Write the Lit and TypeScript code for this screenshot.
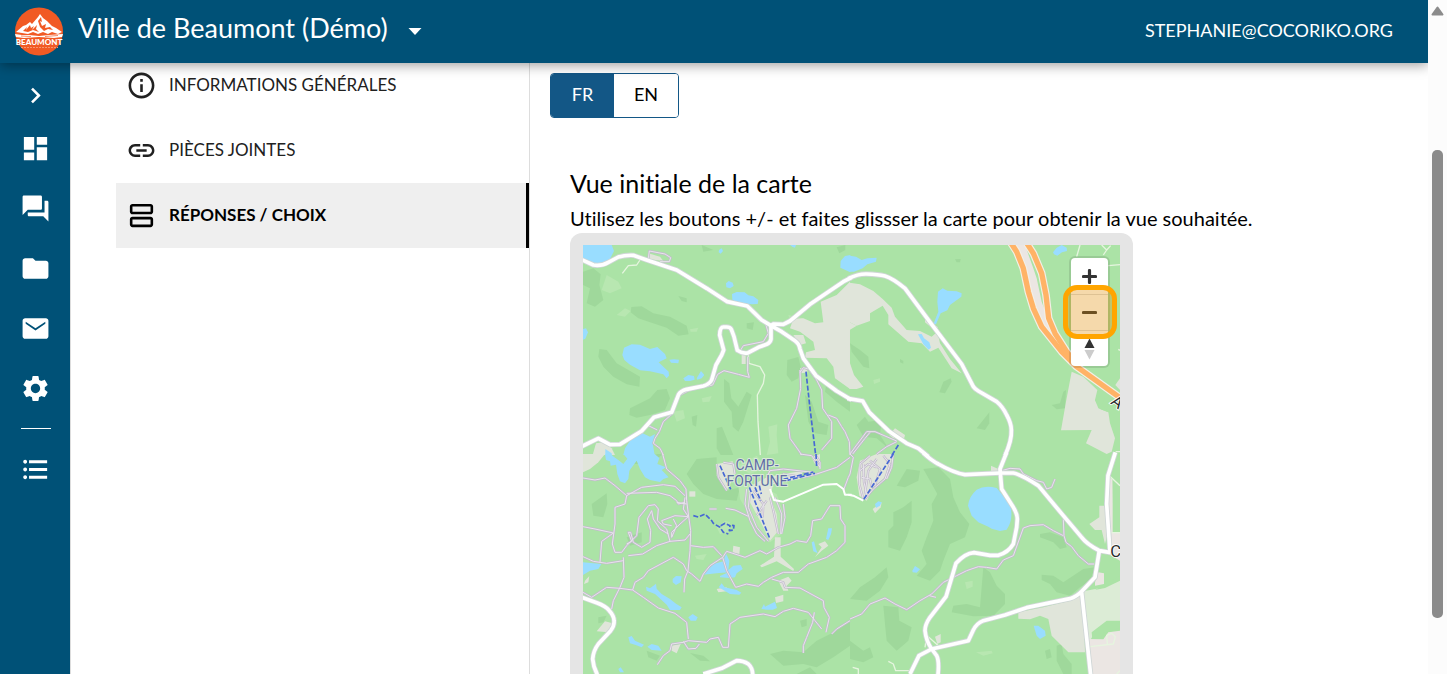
import { LitElement, html, css, svg } from "lit";
import { customElement, state } from "lit/decorators.js";

type Layer = { kind: string; nw?: string[]; ne?: string[]; sw?: string[]; se?: string[] };

/* The map is stored as four tiles; every tile holds paths in its own coordinates. */
const LAYERS: Layer[] = [
  {
    kind: "shade",
    nw: [
      "M39 110L70 100L92 118L88 150L100 195L75 215L50 205L60 160L39 150Z",
      "M184 216L215 214L250 235L300 245L350 272L356 298L325 302L290 278L240 262L205 250L182 232Z",
      "M88 342L110 345L140 385L175 405L210 425L208 455L170 448L130 425L100 395L85 365Z",
      "M180 520L240 490L262 465L290 462L300 490L285 525L240 540L200 548L178 540Z",
      "M462 432L478 445L484 490L505 515L530 470L545 480L520 560L505 590L488 575L485 530L462 500Z",
      "M440 580L456 575L470 610L490 660H452L440 640Z",
      "M365 545L382 540L378 575L368 570Z",
      "M652 375L685 366L692 395L685 430L665 440L650 420Z",
      "M705 480L725 500L745 560L775 570L770 600L735 595L715 560Z",
      "M770 440L800 460L840 490V530L800 500L765 470Z",
      "M800 37L826 30V45L808 55Z",
      "M325 183L350 190V202L335 198Z",
      "M530 265L552 262L548 285L530 280Z",
      "M395 30L430 45L400 50Z",
    ],
    ne: [
      "M0 325L30 345L55 365L58 400L40 395L5 350Z",
      "M280 440L302 430L305 440L285 475L268 472Z",
      "M380 580L418 532V565L405 585Z",
      "M605 510L630 505L640 470L648 465L645 520L620 523Z",
      "M20 570L45 545L55 560L95 555L90 600L115 640L80 610L40 605Z",
      "M315 73L332 72L330 82L320 82Z",
      "M150 372L160 378V386L150 382Z",
    ],
    sw: [
      "M380 15L440 10L440 60L470 110L510 100L500 140L440 135L400 120L370 90L350 60Z",
      "M65 150L110 118L112 150L100 190L70 185Z",
      "M170 30L262 0H280L240 30Z",
      "M600 600L640 590L700 595L740 560L800 530L840 500V575L790 610L740 640L700 630L640 635Z",
      "M690 500L710 495V515L695 520Z",
      "M85 490L110 485L100 505L85 508Z",
      "M360 597L400 605L420 622L390 620Z",
      "M230 590L270 605L260 620L235 610Z",
      "M680 660L720 640L740 660Z",
      "M170 250L215 235L215 265L180 275Z",
    ],
    se: [
      "M220 45L265 40L300 75L310 130L330 175L358 210L345 250L300 270L280 320L270 350L240 380L200 365L230 330L215 290L230 250L250 200L245 150L262 120L240 80Z",
      "M130 175L160 160L185 140V205L170 250L150 290L115 280L115 230L130 215Z",
      "M30 400L75 370L110 340L115 370L90 410L50 440L0 435Z",
      "M100 455L145 460L148 500L185 520L175 560L140 590L110 560L105 510Z",
      "M310 455L350 450L390 460L400 340L420 355L440 395L465 420V450L430 485L370 487L305 475Z",
      "M570 240L600 235L640 250L650 280L630 285L610 265L570 250Z",
      "M575 362L610 365L640 385L700 345L735 340L720 380L690 400L660 425L620 415L600 390L575 378Z",
      "M620 575L635 570L640 600L665 630V660H640L620 620Z",
      "M585 590L600 585L605 610L590 615Z",
      "M0 560L40 590L60 580L70 610L40 625L0 615Z",
      "M170 45L210 50L205 80L165 100L140 95Z",
    ],
  },
  {
    kind: "light",
    nw: [
      "M110 120L145 140L155 160L120 175L95 165Z",
      "M165 220L182 228L165 245L140 240Z",
      "M310 530L340 525L345 550L320 560Z",
      "M360 283L385 278L380 290L362 290Z",
      "M655 240L700 250L690 262L660 255Z",
      "M595 575L622 568L620 600L625 655L590 660L600 620Z",
      "M395 490L425 483L418 500L398 502Z",
    ],
    ne: ["M70 435L90 430V440L72 447Z"],
    sw: [
      "M505 95L560 90L620 120L645 190L635 240L600 265L575 245L545 195L510 135Z",
      "M375 305L410 300L400 318L380 315Z",
      "M440 220L465 200L480 205L478 235L450 240Z",
      "M500 35L560 5L590 40L540 60Z",
    ],
    se: [
      "M345 385L368 380V398L350 405Z",
      "M378 595L425 590L428 598L400 605Z",
      "M680 455L695 460V480L680 478Z",
    ],
  },
  {
    kind: "meadow",
    se: ["M700 412L765 400L810 372V505H775L740 525L720 560L706 560Z"],
  },
  {
    kind: "sand",
    nw: [
      "M840 140L800 180L752 200L760 262L735 265L700 250L670 252L660 280L690 290L730 320L735 345L708 352L705 368L770 370L790 395L795 430L840 462Z",
      "M670 300L700 300L708 325L690 330Z",
      "M235 55L270 65L280 78L235 72Z",
      "M68 660L78 625L100 622L125 640L135 660Z",
      "M515 360H527V387H515Z",
      "M690 400L712 395L712 412L695 415Z",
    ],
    ne: [
      "M-1 143L30 148L70 168L98 192L125 218L135 245L170 285L210 288L245 305L262 290L270 325L300 372L335 415L305 400L265 338L240 350L215 325L175 320L115 268V240L98 212L60 235V258L20 272L-1 262Z",
      "M-1 262L20 272L-6 288L-18 300L-12 345L0 385L12 420L40 455L20 462L-1 462Z",
      "M225 250L262 275L270 300L225 262Z",
      "M665 410L700 425L742 465L735 495L745 520L775 532L780 565L795 610L785 650L770 657L708 625L725 585L633 586L648 500Z",
      "M118 600L135 580L165 600L162 612L130 610Z",
      "M810 430V465L796 450Z",
    ],
    sw: [
      "M39 0H105L85 25L60 45L39 55Z",
      "M440 30L488 22L493 65L470 110L452 85L440 65Z",
      "M535 100L590 70L640 60L700 50L690 75L610 90L600 130L620 180L625 230L600 260L570 200L540 145Z",
      "M358 112H376V128H358Z",
      "M615 250H632V308L672 345L670 351L620 322L575 340L570 335L612 308Z",
      "M490 275L510 280L508 300L488 296Z",
      "M735 310L755 280L745 270L765 262L775 275L755 290Z",
      "M625 380L655 368L665 380L650 395L655 410L640 410Z",
      "M615 430L640 422L640 442L618 447Z",
      "M80 532L105 502L128 508L115 535Z",
      "M305 575L332 570L320 598L305 590Z",
      "M440 405L470 400V412L445 415Z",
      "M45 380L58 366L55 385L42 390Z",
      "M725 10L750 0V40L735 30Z",
    ],
    se: [
      "M30 20L80 0H130L128 35L100 75L70 100L50 140L28 125L20 70Z",
      "M68 165L95 145L92 160L75 178Z",
      "M423 35L445 45V55H423Z",
      "M505 475L580 460L660 440L690 425L700 440L705 595H655L605 545L595 495L570 485L540 496L505 494Z",
      "M718 210L748 190V155H775L775 230L765 270L755 228L735 228Z",
      "M255 548L272 540V565L262 570Z",
    ],
  },
  {
    kind: "urban",
    se: [
      "M712 555L760 556L775 535L810 530V700H722Z",
      "M775 65L788 78V235H810V320L775 300Z",
      "M735 385L745 355L762 358V390L735 395Z",
    ],
    ne: ["M495 30H525L550 100L560 130L575 200L590 240L615 285L625 340L590 290L562 240L545 180L535 130Z"],
  },
  {
    kind: "forest",
    ne: ["M735 495L750 482L765 490L755 510L775 532L750 522Z"],
    se: [
      "M725 535L770 500H811V520L785 532L762 535L750 555H727Z",
      "M788 78L811 95V222L790 225Z",
      "M735 408L762 392L811 365V380L765 402Z",
    ],
  },
  {
    kind: "water",
    nw: [
      "M39 30H125L132 48L120 72L98 85L65 84L39 72Z",
      "M447 45L455 40L459 48L452 56L446 52Z",
      "M660 30H678L675 38L668 36Z",
      "M468 145L476 138L488 143L491 153L480 160L469 157Z",
      "M486 177L500 171L524 172L535 181L550 184L565 195L563 207L545 208L500 203L487 194Z",
      "M841 60L825 63L812 78L811 98L841 112Z",
      "M39 282L48 280L54 292L46 311L39 314Z",
      "M157 360L162 338L185 328L210 329L240 342L262 336L285 357L290 370L266 382L296 410L297 422L290 430L280 418L240 409L210 406L180 389L163 375Z",
      "M298 374L312 373L327 374L325 385L303 383Z",
      "M340 430L355 420L372 423L374 434L360 438H345Z",
      "M380 430L393 408L403 420L395 430L382 434Z",
      "M160 660L165 640L185 610L215 593L240 605L255 597L248 625L254 660Z",
      "M106 642L125 655V660H106Z",
    ],
    ne: [
      "M0 62L18 65L35 75L52 70L80 68L78 80L52 88L38 100L12 110L0 110Z",
      "M262 200L264 170L278 160L292 167L320 169L335 175L334 185L300 210L292 226L272 235L258 268H250L265 230Z",
      "M204 298L215 297L222 310L238 322L243 338L236 344L220 328Z",
      "M609 52L620 38L635 30L650 38L651 48L636 52L622 62L612 58Z",
    ],
    sw: [
      "M105 0L108 18L120 22L122 35L138 32L142 60L150 82L165 88L175 75L178 50L200 20L210 45L225 70L240 78L270 84L280 75L296 70L275 48L288 40L262 30L268 12L254 0H160L172 14L160 30L148 20L128 6L124 0Z",
      "M39 325L94 330L85 345L60 350L39 363Z",
      "M308 375L318 366L335 367L332 385L318 393L308 385Z",
      "M228 398L240 403L258 389L260 404L275 420L300 435L318 449L335 460L330 468H300L290 452L255 420L230 410Z",
      "M400 362L430 330L460 322L468 298L478 320L475 348L490 335L512 333L518 345L500 358L495 370L478 372L450 370V366L475 355L440 358Z",
      "M446 400L455 388L464 400L500 408L514 416L508 422L480 420Z",
      "M355 490L368 480L383 490L378 500L362 500Z",
      "M175 550L185 546L195 560L222 572L215 580L195 572L180 568Z",
      "M232 578L245 570L265 575L275 590L245 588Z",
      "M145 645L152 640L162 655L150 655Z",
      "M574 465L582 450L585 458L615 443L621 462L608 467H590Z",
      "M725 265L732 262L738 285L743 298L730 292Z",
      "M768 255L775 223H786L783 240L775 258Z",
    ],
    se: [
      "M354 155Q356 128 380 107Q405 92 440 102L455 120L475 145Q486 160 484 185Q484 205 470 227L450 231L425 224L415 218L385 205L365 185Z",
      "M75 150L85 142L95 145L90 155L78 162Z",
      "M187 350L195 336L210 346L200 356L188 355Z",
      "M551 515L565 515L585 530L587 545L570 555L560 545Z",
    ],
  },
  {
    kind: "lane",
    nw: [
      "M210 75L200 90L175 92L157 115",
      "M535 358L537 385L570 395L584 420L580 445L562 480L564 560L571 660",
    ],
    ne: [
      "M690 30L680 65M755 30L770 45L760 60M770 45L782 32M775 92L810 89M805 343L810 346M797 650H810",
    ],
    se: [
      "M778 65L810 95M775 236H810M720 578L790 570L796 548L785 538L770 544L772 570M115 622L130 630L137 650H180M8 640L25 645V660M220 535L265 575M230 545L225 580M810 650L800 660",
    ],
  },
  {
    kind: "trail",
    nw: [
      "M235 70L238 48L285 57L302 68L298 80L270 80",
      "M588 270L595 295L580 320L520 332L512 345",
      "M533 365L533 410L538 427L505 418L462 407L443 418L428 450",
      "M428 450L405 455L360 465L330 480M308 535L280 560L268 590L255 610L250 625L270 640L280 660M235 572L262 585",
      "M690 405L692 460L680 520L655 570L660 610L685 645L695 660M715 400L740 435L755 465L758 520L785 560L785 610L755 645M775 540L800 550L815 575L825 590L838 620L840 660",
      "M690 412L700 398L715 402",
    ],
    ne: [
      "M0 657L20 630L50 590L75 590L140 618M8 657L45 610L60 592M80 657L110 635L140 620",
    ],
    sw: [
      "M278 0L290 45L330 80L348 105L350 140L355 180L362 230L360 290L354 350L344 375L342 415",
      "M39 72L75 78L105 72L135 95L170 125L165 150L135 160L135 210L127 270L135 295L155 295L170 275L200 245L207 190L235 155L255 152L265 165L262 200L290 225L300 262",
      "M170 125L215 100L280 92L315 97L345 125M170 118L260 115L300 125L320 140L325 150L345 145",
      "M39 218L75 225L130 237L95 262L90 325M39 308L70 322L110 328L160 320",
      "M175 305L218 300L260 275L300 262L345 258L360 240",
      "M160 310L162 370L150 400L130 440L125 465M39 415L65 430L110 400L150 403L188 408L220 430L265 462L315 478L350 505L355 555",
      "M188 408L195 385L220 370L235 350L310 310L340 330L350 350L365 360L390 382L400 360L420 335L458 310L470 292L510 305L525 310L570 290L590 300L625 280L660 270L680 260L710 265L722 245L728 200L755 195L780 155H810L812 195L825 215V265L800 290L770 310L715 330L685 355L640 355L605 370L580 385L565 397L530 390L497 400L470 350L458 310",
      "M362 275L400 280L430 278L455 305",
      "M605 375L640 385L645 400L690 402L760 440L762 460L778 490L768 535M715 475L735 500L755 525M733 475L728 505L710 550L700 575V597",
      "M715 475L670 463L640 472L615 488L580 480L510 490L480 510L475 580H458L445 550L420 555L410 565L355 560L340 565L305 570L300 590L280 605L262 632M340 562L355 585L378 583L388 570",
      "M170 270L185 262L175 235H182L190 265L215 280L240 265L242 230L232 195L245 170L250 195L270 225L295 240",
      "M275 200L315 185L355 188L330 210L305 235L305 250L320 215L310 195M345 130L340 165L355 188M320 145L350 150M275 200L280 210L305 215",
      "M418 165H440M467 163L495 168L535 187M785 540L800 525L840 500",
      "M440 30L445 70L470 110M460 25L490 30L495 60M530 105L525 150L540 200L560 240L585 262M540 115L535 160L560 220L595 262M550 110L580 150L578 190M600 130L610 170L625 240M615 130L635 180L632 240M640 150L645 190L635 240M590 70L600 50L640 45L730 55M600 90L640 60L700 70L740 60L800 40L840 10M590 140L560 185M690 0L725 5L750 40M735 0L750 25V45M820 110L835 70L840 60",
    ],
    se: [
      "M0 495L35 480L60 450L105 432L135 450L170 467L210 440L245 420L280 385L320 365L350 350L385 338L410 340L440 345L460 318L490 305L520 222L540 215L580 212L610 230L640 245M640 195L642 245L648 265L665 278L685 305L715 330H732",
      "M455 50L480 43L510 45L520 60L560 80L580 85L590 105L605 100L615 75M238 425L258 430",
      "M30 30L60 5M30 30L28 90L40 135M40 30L42 85L50 120M60 20L90 45L75 95M80 15L55 50L45 120M100 5L120 30L105 75L70 105L45 135M130 0L125 40L110 75M35 70L60 75L65 100M30 50L55 30L80 40M0 0L10 10L0 60",
    ],
  },
  {
    kind: "road-casing",
    nw: [
      "M30 72L70 90Q95 94 115 82L145 66Q165 60 190 61L230 75L320 105L410 160L472 200L532 213L575 255L603 272L635 290L675 317Q688 326 690 342L700 370L738 422L800 468L845 495",
      "M603 272L610 267L640 268L660 258L720 208L820 140L845 127",
      "M603 272V312Q602 322 590 328L565 337L535 353Q520 358 502 346L492 305L484 283Q480 276 470 276H460Q450 276 449 300L461 345L455 360L438 390L425 435Q418 448 400 453L350 463Q332 468 326 478L305 532L252 547L215 588L150 628L120 629L85 610L36 634",
    ],
    ne: [
      "M-5 131Q25 116 50 117Q85 118 105 123Q128 130 165 160L245 268L335 387L370 455Q375 462 385 468L440 500Q458 515 470 540Q484 565 484 585Q486 615 465 662",
      "M-8 490L38 498L58 532L115 587L170 625L205 640L235 665",
    ],
    sw: [
      "M30 428L80 446Q108 456 118 470Q132 485 132 500Q134 515 122 530L85 570Q70 590 68 615Q70 640 82 662",
      "M400 660L455 643L500 620Q520 620 535 630Q548 642 548 662",
    ],
    se: [
      "M220 -3Q245 20 265 30Q310 56 345 62L450 57H490Q510 60 565 95L640 185L695 250Q710 270 748 290L782 296",
      "M470 -5L450 45L455 105L490 160Q502 180 502 195L500 220L490 270Q475 295 445 304H420L372 296Q345 298 318 328L288 428L240 490Q225 512 225 530Q228 560 245 585L260 605Q268 620 264 662",
      "M180 660L207 605L245 585L355 560L370 528Q380 508 400 500L465 483L530 461L660 434Q680 428 697 410L735 370L748 290",
      "M695 415L722 662M796 -5L774 65L770 150L780 296",
    ],
  },
  {
    kind: "minor",
    sw: ["M600 105L612 138L640 143L760 92L800 90L820 105L825 122H845"],
    se: ["M-5 122L10 125L40 140"],
  },
  {
    kind: "highway",
    ne: [
      "M483 24L500 50L520 100L535 170L550 220L575 275L635 350L680 395L815 492",
      "M530 24L550 55L575 115L588 180L596 250L615 295L650 350L685 395",
    ],
  },
  {
    kind: "lift",
    nw: ["M708 410L720 520L737 660"],
    sw: [
      "M450 35L484 110M538 100L600 255M555 100L572 140M738 0L740 40M640 76L730 54M648 80L735 58M568 95L574 120",
      "M370 185L385 189L405 180L425 200L430 208L450 220L460 235L475 240M452 215L465 208L480 215L478 230L490 228L492 215L480 213",
    ],
    ne: ["M145 630L125 662"],
    se: ["M130 0L40 138"],
  },
];

const ORIGINS: Record<string, string> = {
  nw: "translate(0 0)",
  ne: "translate(840 0)",
  sw: "translate(0 657)",
  se: "translate(840 657)",
};

@customElement("area-map")
export class AreaMap extends LitElement {
  static styles = css`
    :host {
      display: block;
      position: relative;
      overflow: hidden;
    }
    .map {
      display: block;
      width: 100%;
      background: #abe3a6;
    }
    path {
      fill: none;
      stroke-linejoin: round;
    }
    .shade path { fill: #9fd89b; }
    .light path { fill: #b8e7b1; }
    .meadow path { fill: #dcecd6; }
    .forest path { fill: #abe3a6; }
    .sand path { fill: #e0e5da; }
    .urban path { fill: #ebe6e3; }
    .water path { fill: #99ddff; }
    .lane path { stroke: #e6f5df; stroke-width: 4; }
    .trail-casing path { stroke: #c2bccb; stroke-width: 7; }
    .trail path { stroke: #e9e4ed; stroke-width: 3; }
    .road-casing path { stroke: #cfd6d6; stroke-width: 16; }
    .road path { stroke: #fff; stroke-width: 11; }
    .minor path { stroke: #fff; stroke-width: 6; }
    .highway-casing path { stroke: #f3efe6; stroke-width: 23; }
    .highway path { stroke: #ffb366; stroke-width: 16; }
    .lift path { stroke: #4668d4; stroke-width: 5; stroke-dasharray: 15 6; }
    .place {
      font-family: Roboto, sans-serif;
      font-size: 42px;
      fill: #626ea5;
      stroke: #d9ead8;
      stroke-width: 6;
      paint-order: stroke;
      text-anchor: middle;
    }
    .town {
      font-family: Roboto, sans-serif;
      font-size: 50px;
      fill: #2b2b2b;
      stroke: #fff;
      stroke-width: 5;
      paint-order: stroke;
    }
    .controls {
      position: absolute;
      top: 13px;
      right: 12px;
      width: 37px;
      border-radius: 4px;
      background: #fff;
      box-shadow: 0 0 0 2px rgb(0 0 0 / 10%);
    }
    .control {
      display: grid;
      place-items: center;
      width: 100%;
      height: 36px;
      padding: 0;
      border: 0;
      background: none;
      color: #333;
    }
    .control + .control {
      border-top: 1px solid #ddd;
    }
    .highlight {
      position: absolute;
      top: 40px;
      right: 3px;
      box-sizing: border-box;
      width: 54px;
      height: 54px;
      border: 5px solid #ffa500;
      border-radius: 14px;
      background: rgb(225 141 0 / 33%);
      pointer-events: none;
    }
  `;

  private layer(kind: string, data: Layer) {
    return svg`<g class=${kind}>${Object.keys(ORIGINS).map(
      (tile) => svg`<g transform=${ORIGINS[tile]}>${((data as any)[tile] ?? []).map((d: string) => svg`<path d=${d} />`)}</g>`
    )}</g>`;
  }

  render() {
    return html`
      <svg class="map" viewBox="39 30 1611 1350" role="img" aria-label="Carte de Camp-Fortune">
        ${LAYERS.map((l) => {
          if (l.kind === "trail") return [this.layer("trail-casing", l), this.layer("trail", l)];
          if (l.kind === "road-casing") return [this.layer("road-casing", l), this.layer("road", l)];
          if (l.kind === "highway") return [this.layer("highway-casing", l), this.layer("highway", l)];
          return this.layer(l.kind, l);
        })}
        <text class="place" x="561" y="704">CAMP-</text>
        <text class="place" x="561" y="752">FORTUNE</text>
        <text class="town" transform="translate(1619 505) rotate(36)">A</text>
        <text class="town" x="1621" y="965">C</text>
      </svg>
      <div class="controls">
        <button class="control" aria-label="Zoom avant">
          <svg width="15" height="15" viewBox="0 0 15 15"><path d="M7.500 1.500V13.500M1.500 7.500H13.500" stroke="#333" stroke-width="3.200" stroke-linecap="round" /></svg>
        </button>
        <button class="control" aria-label="Zoom arrière">
          <svg width="15" height="15" viewBox="0 0 15 15"><path d="M1.500 7.500H13.500" stroke="#333" stroke-width="3.200" stroke-linecap="round" /></svg>
        </button>
        <button class="control" aria-label="Orienter vers le nord">
          <svg width="11" height="22" viewBox="0 0 11 22"><polygon points="0.500,10 5.500,0.500 10.500,10" fill="#333" /><polygon points="0.500,12 5.500,21.500 10.500,12" fill="#ccc" /></svg>
        </button>
      </div>
      <div class="highlight"></div>
    `;
  }
}

const ICONS: Record<string, string> = {
  chevron: "M10 6L8.59 7.41 13.17 12l-4.58 4.59L10 18l6-6z",
  dashboard: "M3 13h8V3H3v10zm0 8h8v-6H3v6zm10 0h8V11h-8v10zm0-18v6h8V3h-8z",
  forum: "M21 6h-2v9H6v2c0 .55.45 1 1 1h11l4 4V7c0-.55-.45-1-1-1zm-4 6V3c0-.55-.45-1-1-1H3c-.55 0-1 .45-1 1v14l4-4h10c.55 0 1-.45 1-1z",
  folder: "M10 4H4c-1.1 0-1.99.9-1.99 2L2 18c0 1.100.9 2 2 2h16c1.100 0 2-.9 2-2V8c0-1.100-.9-2-2-2h-8l-2-2z",
  mail: "M20 4H4c-1.100 0-1.990.9-1.990 2L2 18c0 1.100.9 2 2 2h16c1.100 0 2-.9 2-2V6c0-1.100-.9-2-2-2zm-.4 4.250l-7.600 5.250-7.600-5.250v-1.500l7.600 5.050 7.600-5.050z",
  settings:
    "M19.140 12.940c.04-.3.06-.61.06-.94 0-.32-.02-.64-.07-.94l2.030-1.580c.18-.14.23-.41.12-.61l-1.920-3.320c-.12-.22-.37-.29-.59-.22l-2.390.96c-.5-.38-1.030-.7-1.620-.94l-.36-2.540c-.04-.24-.24-.41-.48-.41h-3.840c-.24 0-.43.17-.47.41l-.36 2.540c-.59.24-1.130.57-1.620.94l-2.390-.96c-.22-.08-.47 0-.59.22L2.740 8.870c-.12.21-.08.47.12.61l2.030 1.580c-.05.3-.09.63-.09.94s.02.64.07.94l-2.030 1.580c-.18.14-.23.41-.12.61l1.920 3.320c.12.22.37.29.59.22l2.390-.96c.5.38 1.030.7 1.620.94l.36 2.540c.05.24.24.41.48.41h3.840c.24 0 .44-.17.47-.41l.36-2.540c.59-.24 1.130-.56 1.620-.94l2.390.96c.22.08.47 0 .59-.22l1.920-3.320c.12-.22.07-.47-.12-.61l-2.010-1.580zM12 15.600c-1.980 0-3.600-1.620-3.600-3.600s1.620-3.600 3.600-3.600 3.600 1.620 3.600 3.600-1.620 3.600-3.600 3.600z",
  list: "M4 10.500c-.83 0-1.500.67-1.500 1.500s.67 1.500 1.500 1.500 1.500-.67 1.500-1.500-.67-1.500-1.500-1.500zm0-6c-.83 0-1.500.67-1.500 1.500S3.170 7.500 4 7.500 5.500 6.830 5.500 6 4.830 4.500 4 4.500zm0 12c-.83 0-1.500.68-1.500 1.500s.68 1.500 1.500 1.500 1.500-.68 1.500-1.500-.67-1.500-1.500-1.500zM7 19.250h14v-2.500H7v2.500zm0-6h14v-2.500H7v2.500zm0-8.500v2.500h14v-2.500H7z",
  info: "M11 7h2v2h-2zm0 4h2v6h-2zm1-9C6.480 2 2 6.480 2 12s4.480 10 10 10 10-4.480 10-10S17.520 2 12 2zm0 18c-4.410 0-8-3.590-8-8s3.590-8 8-8 8 3.590 8 8-3.590 8-8 8z",
  link: "M3.900 12c0-1.710 1.390-3.100 3.100-3.100h4V7H7c-2.760 0-5 2.240-5 5s2.240 5 5 5h4v-1.900H7c-1.710 0-3.100-1.390-3.100-3.100zM8 13h8v-2H8v2zm9-6h-4v1.900h4c1.710 0 3.100 1.390 3.100 3.100s-1.390 3.100-3.100 3.100h-4V17h4c2.760 0 5-2.240 5-5s-2.240-5-5-5z",
  answers:
    "M19 13H5c-1.100 0-2 .9-2 2v4c0 1.100.9 2 2 2h14c1.100 0 2-.9 2-2v-4c0-1.100-.9-2-2-2zm0 6H5v-4h14v4zM19 3H5c-1.100 0-2 .9-2 2v4c0 1.100.9 2 2 2h14c1.100 0 2-.9 2-2V5c0-1.100-.9-2-2-2zm0 6H5V5h14v4z",
};

const icon = (name: string, size: number) =>
  html`<svg width=${size} height=${size} viewBox="0 0 24 24" fill="currentColor" aria-hidden="true"><path d=${ICONS[name]} /></svg>`;

@customElement("app-root")
export class AppRoot extends LitElement {
  static styles = css`
    :host {
      display: flex;
      height: 100vh;
      overflow: hidden;
      background: #fff;
      color: #000;
      font-family: Lato, sans-serif;
      font-size: 18px;
      font-variant-ligatures: none;
    }
    * {
      box-sizing: border-box;
    }
    a {
      color: inherit;
      text-decoration: none;
    }
    button {
      font: inherit;
      cursor: pointer;
    }
    svg {
      display: block;
    }
    .page {
      flex: 1;
      min-width: 0;
      display: flex;
      flex-direction: column;
      overflow: hidden;
    }
    .top {
      z-index: 1;
      flex: none;
      display: flex;
      align-items: center;
      height: 63px;
      padding: 0 35px 0 14px;
      background: #005177;
      color: #fff;
      box-shadow: 0 2px 12px rgb(0 0 0 / 40%);
    }
    .site {
      display: flex;
      align-items: center;
      gap: 14px;
      padding: 0;
      border: 0;
      background: none;
      color: inherit;
      font-size: 27px;
      line-height: 36px;
    }
    .name {
      padding-bottom: 8px;
    }
    .arrow {
      margin-left: 6px;
    }
    .brand {
      font-family: Lato, sans-serif;
      font-weight: 900;
      font-size: 8px;
      text-anchor: middle;
      fill: #fff;
    }
    .account {
      margin-left: auto;
      padding-bottom: 4px;
    }
    .body {
      flex: 1;
      min-height: 0;
      display: flex;
    }
    .rail {
      flex: none;
      display: flex;
      flex-direction: column;
      align-items: center;
      width: 71px;
      padding: 9px 0 0 1px;
      border-right: 1px solid #ddd;
      background: #005177;
      color: #fff;
    }
    .rail-link {
      flex: none;
      display: grid;
      place-items: center;
      width: 100%;
      height: 60px;
    }
    .toggle {
      height: 46px;
      border: 0;
      padding: 0;
      background: none;
      color: inherit;
    }
    .rule {
      flex: none;
      width: 30px;
      height: 1px;
      margin: 10px 0;
      background: #fff;
    }
    .scrolled {
      flex: 1;
      min-width: 0;
      display: flex;
      margin-top: -10px;
    }
    .steps {
      flex: none;
      width: 459px;
      padding-left: 45px;
      border-right: 1px solid #ddd;
    }
    .step {
      display: flex;
      align-items: center;
      gap: 12px;
      height: 65px;
      padding: 0 10px;
      color: #212121;
      font-size: 17px;
    }
    .step.current {
      border-right: 3px solid #000;
      background: #efefef;
      color: #000;
      font-weight: 700;
    }
    .label {
      padding-bottom: 3px;
    }
    .panel {
      flex: 1;
      min-width: 0;
      padding: 20px 20px 0;
    }
    .langs {
      display: inline-flex;
      border: 1px solid #135786;
      border-radius: 4px;
      overflow: hidden;
    }
    .lang {
      width: 63px;
      height: 43px;
      padding: 0 0 4px;
      border: 0;
      background: #fff;
      color: #000;
    }
    .lang + .lang {
      width: 64px;
    }
    .lang.on {
      background: #135786;
      color: #fff;
    }
    .view {
      padding: 45px 20px 0;
    }
    .title {
      margin: 0;
      font-size: 25px;
      font-weight: 400;
      line-height: 40px;
    }
    .hint {
      margin: 0;
      font-size: 20px;
      line-height: 30px;
    }
    .frame {
      max-width: 563px;
      padding: 12px 13px;
      border-radius: 12px;
      background: #e5e5e5;
    }
    .scrollbar {
      flex: none;
      display: flex;
      flex-direction: column;
      align-items: center;
      width: 19px;
      padding: 6px 1px 0 0;
      background: #fcfcfc;
    }
    .thumb {
      width: 11px;
      height: 70%;
      margin-top: 134px;
      border-radius: 5px;
      background: #8b8b8b;
    }
  `;

  @state() private lang = "FR";

  render() {
    const sections: [string, string][] = [
      ["dashboard", "Tableau de bord"],
      ["forum", "Discussions"],
      ["folder", "Dossiers"],
      ["mail", "Courriels"],
      ["settings", "Paramètres"],
    ];
    const steps: [string, string][] = [
      ["info", "INFORMATIONS GÉNÉRALES"],
      ["link", "PIÈCES JOINTES"],
      ["answers", "RÉPONSES / CHOIX"],
    ];
    return html`
      <div class="page">
        <header class="top">
          <button class="site">
            <svg width="50" height="50" viewBox="0 0 50 50" aria-hidden="true">
              <circle cx="25" cy="24.500" r="24" fill="#f15a24" />
              <path d="M2 25L9 19L12 18L16 15L18 17L24 10L26 7L29 11L33 14L38 19L42 21L48 25L44 27L38 25L34 27L29 25L24 27L19 25L14 27L8 26Z" fill="#fff" />
              <path d="M9 24L13 20L12 23L16 18L17 21L20 19L18 23L23 18L22 22L25 25L19 23L14 25ZM27 10L28 15L26 14L28 19L32 17L31 21L36 20L39 23L34 22L30 24L26 20L24 14Z" fill="#f15a24" />
              <path d="M1 27L8 28L15 28L25 29L35 28L49 27L48 30L40 31L25 30L10 31L2 30Z" fill="#fff" />
              <path d="M7 29L17 29.500M31 29.500L44 28.500" stroke="#f15a24" stroke-width="0.700" />
              <text class="brand" x="25" y="38">BEAUMONT</text>
              <path d="M7 40.500H44" stroke="#f7936c" stroke-width="1" stroke-dasharray="2 1" />
            </svg>
            <span class="name">Ville de Beaumont (Démo)</span>
            <svg class="arrow" width="14" height="7" viewBox="0 0 14 7" aria-hidden="true"><path d="M0.500 0H13.500L7 7Z" fill="#fff" /></svg>
          </button>
          <a class="account" href="#compte">STEPHANIE@COCORIKO.ORG</a>
        </header>
        <div class="body">
          <nav class="rail" aria-label="Principale">
            <button class="rail-link toggle" aria-label="Ouvrir le menu">${icon("chevron", 31)}</button>
            ${sections.map(([name, label]) => html`<a class="rail-link" href="#${name}" aria-label=${label}>${icon(name, 31)}</a>`)}
            <div class="rule"></div>
            <a class="rail-link" href="#liste" aria-label="Liste">${icon("list", 31)}</a>
          </nav>
          <div class="scrolled">
            <nav class="steps" aria-label="Étapes">
              ${steps.map(
                ([name, label]) => html`<a class="step ${name === "answers" ? "current" : ""}" href="#${name}">${icon(name, 31)}<span class="label">${label}</span></a>`
              )}
            </nav>
            <main class="panel">
              <div class="langs" role="group" aria-label="Langue">
                ${["FR", "EN"].map(
                  (l) => html`<button class="lang ${this.lang === l ? "on" : ""}" aria-pressed=${this.lang === l} @click=${() => (this.lang = l)}>${l}</button>`
                )}
              </div>
              <section class="view">
                <h2 class="title">Vue initiale de la carte</h2>
                <p class="hint">Utilisez les boutons +/- et faites glissser la carte pour obtenir la vue souhaitée.</p>
                <div class="frame"><area-map></area-map></div>
              </section>
            </main>
          </div>
        </div>
      </div>
      <div class="scrollbar" aria-hidden="true">
        <svg width="13" height="10" viewBox="0 0 13 10"><path d="M6.500 1.500L11.500 8.500H1.500Z" fill="#8b8b8b" stroke="#8b8b8b" stroke-width="2" stroke-linejoin="round" /></svg>
        <div class="thumb"></div>
      </div>
    `;
  }
}
